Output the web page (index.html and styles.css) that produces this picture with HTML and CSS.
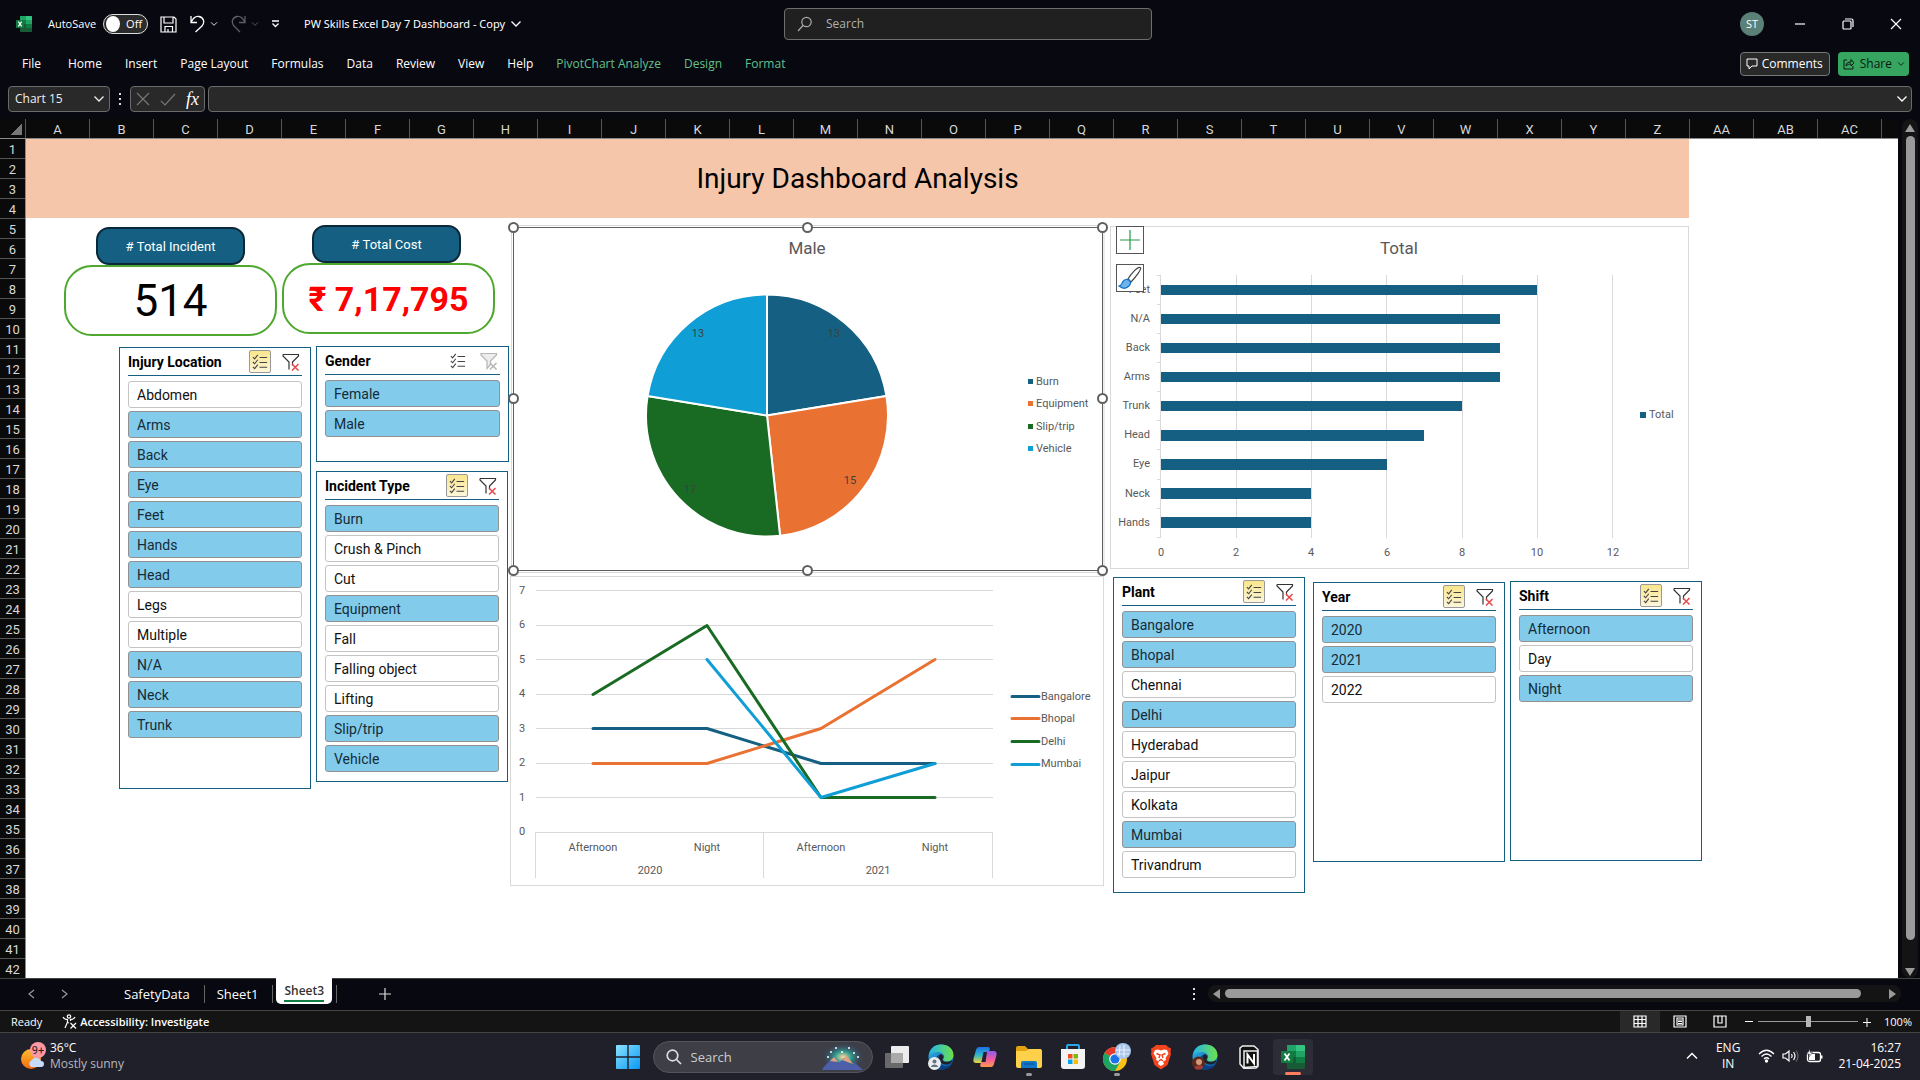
FILE: index.html
```html
<!DOCTYPE html>
<html lang="en">
<head>
<meta charset="utf-8">
<title>PW Skills Excel Day 7 Dashboard - Copy</title>
<link rel="stylesheet" href="styles.css">
</head>
<body>
<svg class="defs" aria-hidden="true">
  <defs>
    <symbol id="chev" viewBox="0 0 12 8"><path d="M1.500 1.500 6 6 10.500 1.500" fill="none" stroke="currentColor" stroke-width="1.300"/></symbol>
    <symbol id="multi" viewBox="0 0 18 18"><path d="M1 3.500 3 5.500 6.500 1M1 9 3 11 6.500 6.500M1 14.500 3 16.500 6.500 12M8.500 4H17M8.500 9.500H17M8.500 15H17" fill="none" stroke="#444" stroke-width="1.200"/></symbol>
    <symbol id="clear" viewBox="0 0 18 18"><path d="M1 1.500H16.500V3L10.500 9V12.500M1 1.500V3L7 9V16.500" fill="none" stroke="#333" stroke-width="1.200"/><path d="M10 11 16.500 17.500M16.500 11 10 17.500" stroke="#e8484a" stroke-width="1.500"/></symbol>
    <symbol id="clear-off" viewBox="0 0 18 18"><path d="M1 1.500H16.500V3L10.500 9V12.500L7 16.500V9L1 3Z" fill="#ededed" stroke="#b5b5b5" stroke-width="1.200"/><path d="M10 11 16.500 17.500M16.500 11 10 17.500" stroke="#b5b5b5" stroke-width="1.500"/></symbol>
    <symbol id="excel" viewBox="0 0 24 24"><path d="M7 0H23a1 1 0 0 1 1 1V23a1 1 0 0 1-1 1H7a1 1 0 0 1-1-1V1a1 1 0 0 1 1-1Z" fill="#185c37"/><path d="M6 0H15V6H6Z" fill="#21a366"/><path d="M15 0H23a1 1 0 0 1 1 1V6H15Z" fill="#33c481"/><path d="M6 6H15V12H6Z" fill="#107c41"/><path d="M15 6H24V12H15Z" fill="#21a366"/><path d="M15 12H24V18H15Z" fill="#107c41"/><rect y="6" width="12" height="12" rx="1" fill="#107c41"/><path d="M3.500 8.500 8.500 15.500M8.500 8.500 3.500 15.500" stroke="#fff" stroke-width="1.800"/></symbol>
    <linearGradient id="edgeBlue" x1="0" y1="0" x2="1" y2="1"><stop offset="0" stop-color="#2fb9ee"/><stop offset="1" stop-color="#0b4fa0"/></linearGradient>
    <linearGradient id="edgeGreen" x1="0" y1="0" x2="1" y2="0"><stop offset="0" stop-color="#22b5ea"/><stop offset="1" stop-color="#6ee04b"/></linearGradient>
    <symbol id="edge" viewBox="0 0 26 26"><circle cx="13" cy="13" r="12.500" fill="url(#edgeBlue)"/><path d="M1 11C2 4 7 .5 13 .5c8 0 12.500 5 12.500 10.500 0 4-3 6.500-6.500 6.500-3 0-4.500-1.300-3.500-2.500 2-3-.5-7-5-7C6 8 2 10 1 11Z" fill="url(#edgeGreen)"/><path d="M11 11c-3 5 1 11 7 11 3 0 5-1 6-2-2 3.500-6 5.500-10 5.500C8 25 6 20 7 16c.6-2.500 2-4 4-5Z" fill="#0a3f86"/><path d="M11 11c1.500-1.500 4.500-.5 4.500 2 0 1-1.500 2-.7 3.500 1.200 2 7.200 1.500 9.700-.5-1 4-4 5-7 4.500-5-.5-8.500-5-6.500-9.500Z" fill="#20202b"/></symbol>
    <linearGradient id="win" x1="0" y1="0" x2="1" y2="1"><stop offset="0" stop-color="#8be3ff"/><stop offset="1" stop-color="#0a98f5"/></linearGradient>
    <linearGradient id="copA" x1="0" y1="0" x2="0" y2="1"><stop offset="0" stop-color="#1f6fe8"/><stop offset=".5" stop-color="#2bb8c9"/><stop offset="1" stop-color="#f4d03a"/></linearGradient>
    <linearGradient id="copB" x1="0" y1="0" x2="0" y2="1"><stop offset="0" stop-color="#8a5cf0"/><stop offset=".5" stop-color="#ee5aa0"/><stop offset="1" stop-color="#ff9a4d"/></linearGradient>
    <linearGradient id="sun" x1="0" y1="0" x2="0" y2="1"><stop offset="0" stop-color="#fbc02d"/><stop offset="1" stop-color="#f56a12"/></linearGradient>
    <radialGradient id="glow"><stop offset="0" stop-color="#ffd9a0"/><stop offset=".4" stop-color="#2f9a8e"/><stop offset="1" stop-color="#39406a" stop-opacity="0"/></radialGradient>
  </defs>
</svg>

<header class="titlebar">
  <div class="title-left">
    <svg class="i16"><use href="#excel"/></svg>
    <label class="autosave" for="autosave">AutoSave</label>
    <span class="toggle"><input type="checkbox" id="autosave"><span class="toggle-text">Off</span></span>
    <button class="tool save" aria-label="Save"><svg width="17" height="17" viewBox="0 0 17 17" fill="none" stroke="#fff" stroke-width="1.200"><path d="M1 1H14L16 3V16H1ZM4 1V7H13V1M5 16V10.500H12.500V16M8 16V13"/></svg></button>
    <button class="tool undo" aria-label="Undo"><svg width="17" height="18" viewBox="0 0 17 18" fill="none" stroke="#fff" stroke-width="1.300"><path d="M2 1V7.500H8M2 7.500C4 3 7 1 10 1.500c5 1 6 6 3 9.500L6.500 17"/></svg><svg class="ch"><use href="#chev"/></svg></button>
    <button class="tool redo" aria-label="Redo" disabled><svg width="17" height="18" viewBox="0 0 17 18" fill="none" stroke="#5d5d64" stroke-width="1.300"><path d="M15 1V7.500H9M15 7.500C13 3 10 1 7 1.500c-5 1-6 6-3 9.500L10 17"/></svg><svg class="ch"><use href="#chev"/></svg></button>
    <button class="tool" aria-label="Customize Quick Access Toolbar"><svg width="9" height="8" viewBox="0 0 9 8" fill="none" stroke="#fff" stroke-width="1.300"><path d="M1 1H8M1.500 3.500 4.500 6.500 7.500 3.500"/></svg></button>
    <button class="doc">PW Skills Excel Day 7 Dashboard - Copy <svg class="ch12"><use href="#chev"/></svg></button>
  </div>
  <label class="search"><svg width="16" height="16" viewBox="0 0 16 16" fill="none" stroke="#aaa" stroke-width="1.200"><circle cx="9.500" cy="6" r="4.700"/><path d="M6 9.500 1 15"/></svg><input type="search" placeholder="Search" aria-label="Search"></label>
  <div class="title-right">
    <button class="avatar" aria-label="Account">ST</button>
    <button class="win" aria-label="Minimize"><svg width="12" height="12" viewBox="0 0 12 12" stroke="#fff" stroke-width="1.200"><path d="M1 6H11"/></svg></button>
    <button class="win" aria-label="Restore"><svg width="12" height="12" viewBox="0 0 12 12" fill="none" stroke="#fff" stroke-width="1.200"><rect x="1" y="3" width="8" height="8" rx="1"/><path d="M3 1H9.500Q11 1 11 2.500V9"/></svg></button>
    <button class="win" aria-label="Close"><svg width="12" height="12" viewBox="0 0 12 12" stroke="#fff" stroke-width="1.200"><path d="M1 1 11 11M11 1 1 11"/></svg></button>
  </div>
</header>

<nav class="menu">
  <button class="file">File</button><button>Home</button><button>Insert</button><button>Page Layout</button><button>Formulas</button><button>Data</button><button>Review</button><button>View</button><button>Help</button><button class="ctx">PivotChart Analyze</button><button class="ctx">Design</button><button class="ctx">Format</button>
  <span class="spacer"></span>
  <button class="comments"><svg width="12" height="12" viewBox="0 0 12 12" fill="none" stroke="#fff"><path d="M1 1H11V8H6L3 11V8H1Z"/></svg>Comments</button>
  <button class="share"><svg width="12" height="12" viewBox="0 0 12 12" fill="none" stroke="#0b1a10"><path d="M4 2H1V11H10V8M3 8C3 5 5 4 8 4V1.500L11 5 8 8V6C6 6 4.500 6.500 3 8Z"/></svg>Share<svg class="ch"><use href="#chev"/></svg></button>
</nav>

<div class="formula">
  <div class="namebox"><input type="text" value="Chart 15" aria-label="Name Box"><svg class="ch12"><use href="#chev"/></svg></div>
  <svg class="dots" width="4" height="12" viewBox="0 0 4 12" fill="#ddd"><path d="M1 0H3V2H1ZM1 5H3V7H1ZM1 10H3V12H1Z"/></svg>
  <div class="fx">
    <button aria-label="Cancel" disabled><svg width="14" height="14" viewBox="0 0 14 14" stroke="#777" stroke-width="1.200"><path d="M1 1 13 13M13 1 1 13"/></svg></button>
    <button aria-label="Enter" disabled><svg width="16" height="13" viewBox="0 0 16 13" fill="none" stroke="#777" stroke-width="1.200"><path d="M1 8 5 12 15 1"/></svg></button>
    <button class="fn" aria-label="Insert Function">fx</button>
  </div>
  <div class="fbar"><input type="text" aria-label="Formula Bar"><svg class="ch12"><use href="#chev"/></svg></div>
</div>

<main class="workbook">
  <div class="sheet">
    <div class="cols">
      <span class="corner"></span>
      <span>A</span><span>B</span><span>C</span><span>D</span><span>E</span><span>F</span><span>G</span><span>H</span><span>I</span><span>J</span><span>K</span><span>L</span><span>M</span><span>N</span><span>O</span><span>P</span><span>Q</span><span>R</span><span>S</span><span>T</span><span>U</span><span>V</span><span>W</span><span>X</span><span>Y</span><span>Z</span><span>AA</span><span>AB</span><span>AC</span>
    </div>
    <div class="body">
      <div class="rows"><span>1</span><span>2</span><span>3</span><span>4</span><span>5</span><span>6</span><span>7</span><span>8</span><span>9</span><span>10</span><span>11</span><span>12</span><span>13</span><span>14</span><span>15</span><span>16</span><span>17</span><span>18</span><span>19</span><span>20</span><span>21</span><span>22</span><span>23</span><span>24</span><span>25</span><span>26</span><span>27</span><span>28</span><span>29</span><span>30</span><span>31</span><span>32</span><span>33</span><span>34</span><span>35</span><span>36</span><span>37</span><span>38</span><span>39</span><span>40</span><span>41</span><span>42</span></div>
      <div class="canvas">
        <h1 class="banner">Injury Dashboard Analysis</h1>

        <div class="obj pill at-incident">#&nbsp;Total Incident</div>
        <div class="obj kpi at-514">514</div>
        <div class="obj pill at-cost">#&nbsp;Total Cost</div>
        <div class="obj kpi cost at-rupee">₹ 7,17,795</div>

        <section class="obj slicer at-location">
          <header><h2>Injury Location</h2><button class="ms on" aria-label="Multi-Select"><svg><use href="#multi"/></svg></button><button class="cf" aria-label="Clear Filter"><svg><use href="#clear"/></svg></button></header>
          <button class="it">Abdomen</button><button class="it sel">Arms</button><button class="it sel">Back</button><button class="it sel">Eye</button><button class="it sel">Feet</button><button class="it sel">Hands</button><button class="it sel">Head</button><button class="it">Legs</button><button class="it">Multiple</button><button class="it sel">N/A</button><button class="it sel">Neck</button><button class="it sel">Trunk</button>
        </section>

        <section class="obj slicer at-gender">
          <header><h2>Gender</h2><button class="ms" aria-label="Multi-Select"><svg><use href="#multi"/></svg></button><button class="cf" aria-label="Clear Filter" disabled><svg><use href="#clear-off"/></svg></button></header>
          <button class="it sel">Female</button><button class="it sel">Male</button>
        </section>

        <section class="obj slicer at-type">
          <header><h2>Incident Type</h2><button class="ms on" aria-label="Multi-Select"><svg><use href="#multi"/></svg></button><button class="cf" aria-label="Clear Filter"><svg><use href="#clear"/></svg></button></header>
          <button class="it sel">Burn</button><button class="it">Crush &amp; Pinch</button><button class="it">Cut</button><button class="it sel">Equipment</button><button class="it">Fall</button><button class="it">Falling object</button><button class="it">Lifting</button><button class="it sel">Slip/trip</button><button class="it sel">Vehicle</button>
        </section>

        <svg class="obj chart at-bar" width="579" height="343" viewBox="0 0 579 343">
          <rect class="frame" x=".5" y=".5" width="578" height="342"/>
          <text class="ct" x="289" y="28">Total</text>
          <path class="gl" d="M50.500 49V312M126.500 49V312M201.500 49V312M276.500 49V312M352.500 49V312M427.500 49V312M502.500 49V312M47 49.500H50M47 78.500H50M47 107.500H50M47 136.500H50M47 165.500H50M47 194.500H50M47 223.500H50M47 253.500H50M47 282.500H50M47 311.500H50"/>
          <g fill="#156082"><rect x="51" y="59" width="376" height="10"/><rect x="51" y="88" width="339" height="10"/><rect x="51" y="117" width="339" height="10"/><rect x="51" y="146" width="339" height="10"/><rect x="51" y="175" width="301" height="10"/><rect x="51" y="204" width="263" height="11"/><rect x="51" y="233" width="226" height="11"/><rect x="51" y="262" width="150" height="11"/><rect x="51" y="291" width="150" height="11"/><rect x="530" y="186" width="6" height="6"/></g>
          <g class="end"><text x="40" y="67">Feet</text><text x="40" y="96">N/A</text><text x="40" y="125">Back</text><text x="40" y="154">Arms</text><text x="40" y="183">Trunk</text><text x="40" y="212">Head</text><text x="40" y="241">Eye</text><text x="40" y="271">Neck</text><text x="40" y="300">Hands</text></g>
          <g class="mid"><text x="51" y="330">0</text><text x="126" y="330">2</text><text x="201" y="330">4</text><text x="277" y="330">6</text><text x="352" y="330">8</text><text x="427" y="330">10</text><text x="503" y="330">12</text></g>
          <text x="539" y="192">Total</text>
        </svg>

        <svg class="obj chart at-line" width="594" height="310" viewBox="0 0 594 310">
          <rect class="frame" x=".5" y=".5" width="593" height="309"/>
          <path class="gl" d="M26 14.500H483M26 49.500H483M26 83.500H483M26 118.500H483M26 152.500H483M26 187.500H483M26 221.500H483M26 256.500H483M25.500 256V302M253.500 256V302M482.500 256V302"/>
          <g class="mid"><text x="12" y="18">7</text><text x="12" y="52">6</text><text x="12" y="87">5</text><text x="12" y="121">4</text><text x="12" y="156">3</text><text x="12" y="190">2</text><text x="12" y="225">1</text><text x="12" y="259">0</text><text x="83" y="275">Afternoon</text><text x="197" y="275">Night</text><text x="311" y="275">Afternoon</text><text x="425" y="275">Night</text><text x="140" y="298">2020</text><text x="368" y="298">2021</text></g>
          <g class="series"><path stroke="#156082" d="M83 152.500H197L311 187.500H425M502 120.500H529"/><path stroke="#e97132" d="M83 187.500H197L311 152.500 425 83.500M502 142.500H529"/><path stroke="#196b24" d="M83 118.500 197 49.500 311 221.500H425M502 165.500H529"/><path stroke="#0f9ed5" d="M197 83.500 311 221.500 425 187.500M502 188.500H529"/></g>
          <text x="531" y="124">Bangalore</text><text x="531" y="146">Bhopal</text><text x="531" y="169">Delhi</text><text x="531" y="191">Mumbai</text>
        </svg>

        <svg class="obj chart at-pie" width="602" height="356" viewBox="-6 -6 602 356">
          <rect x="0" y="0" width="590" height="344" fill="#fff"/>
          <path d="M-1.500 -1.500H591V345.500H-1.500Z" fill="none" stroke="#d9d9d9"/>
          <rect x=".5" y=".5" width="589" height="343" fill="none" stroke="#5f5f5f"/>
          <text class="ct" x="294" y="27">Male</text>
          <g transform="translate(254 188.500)" stroke="#fff" stroke-width="2" stroke-linejoin="round"><path fill="#156082" d="M0 0V-121A121 121 0 0 1 119.410 -19.580Z"/><path fill="#e97132" d="M0 0 119.410 -19.580A121 121 0 0 1 13.090 120.290Z"/><path fill="#196b24" d="M0 0 13.090 120.290A121 121 0 0 1 -119.410 -19.580Z"/><path fill="#0f9ed5" d="M0 0-119.410 -19.580A121 121 0 0 1 0 -121Z"/></g>
          <g class="mid dk"><text x="321" y="110">13</text><text x="337" y="257">15</text><text x="177" y="266">17</text><text x="185" y="110">13</text></g>
          <rect x="515" y="152" width="5" height="5" fill="#156082"/><rect x="515" y="174" width="5" height="5" fill="#e97132"/><rect x="515" y="197" width="5" height="5" fill="#196b24"/><rect x="515" y="219" width="5" height="5" fill="#0f9ed5"/>
          <text x="523" y="158">Burn</text><text x="523" y="180">Equipment</text><text x="523" y="203">Slip/trip</text><text x="523" y="225">Vehicle</text>
          <g fill="#fff" stroke="#5f5f5f" stroke-width="2"><circle cx=".5" cy=".5" r="4.500"/><circle cx="294.500" cy=".5" r="4.500"/><circle cx="589.500" cy=".5" r="4.500"/><circle cx=".5" cy="171.500" r="4.500"/><circle cx="589.500" cy="171.500" r="4.500"/><circle cx=".5" cy="343.500" r="4.500"/><circle cx="294.500" cy="343.500" r="4.500"/><circle cx="589.500" cy="343.500" r="4.500"/></g>
        </svg>

        <div class="obj tools at-tools">
          <button aria-label="Chart Elements"><svg width="22" height="22" viewBox="0 0 22 22" stroke="#1f9a45" stroke-width="1.200"><path d="M11 1V21M1 11H21"/></svg></button>
          <button aria-label="Chart Styles"><svg width="24" height="24" viewBox="0 0 24 24"><path d="M10 13C13 8 19 1 22 1.500S17 12 13 16Z" fill="#fff" stroke="#444" stroke-width="1.200"/><path d="M1 20C5 20 3 14 8 13.500 12 13 14 17 11 20S4 22.500 1 20Z" fill="#6db3ee" stroke="#1570c4" stroke-width="1.200"/></svg></button>
        </div>

        <section class="obj slicer at-plant">
          <header><h2>Plant</h2><button class="ms on" aria-label="Multi-Select"><svg><use href="#multi"/></svg></button><button class="cf" aria-label="Clear Filter"><svg><use href="#clear"/></svg></button></header>
          <button class="it sel">Bangalore</button><button class="it sel">Bhopal</button><button class="it">Chennai</button><button class="it sel">Delhi</button><button class="it">Hyderabad</button><button class="it">Jaipur</button><button class="it">Kolkata</button><button class="it sel">Mumbai</button><button class="it">Trivandrum</button>
        </section>

        <section class="obj slicer at-year">
          <header><h2>Year</h2><button class="ms on" aria-label="Multi-Select"><svg><use href="#multi"/></svg></button><button class="cf" aria-label="Clear Filter"><svg><use href="#clear"/></svg></button></header>
          <button class="it sel">2020</button><button class="it sel">2021</button><button class="it">2022</button>
        </section>

        <section class="obj slicer at-shift">
          <header><h2>Shift</h2><button class="ms on" aria-label="Multi-Select"><svg><use href="#multi"/></svg></button><button class="cf" aria-label="Clear Filter"><svg><use href="#clear"/></svg></button></header>
          <button class="it sel">Afternoon</button><button class="it">Day</button><button class="it sel">Night</button>
        </section>
      </div>
    </div>
  </div>
  <div class="vscroll">
    <svg width="10" height="8" viewBox="0 0 10 8" fill="#9a9a9a"><path d="M5 0 10 8H0Z"/></svg>
    <div class="vthumb"></div>
    <svg width="10" height="8" viewBox="0 0 10 8" fill="#9a9a9a"><path d="M0 0H10L5 8Z"/></svg>
  </div>
</main>

<div class="tabs">
  <button class="nav" aria-label="Previous sheet"><svg width="7" height="10" viewBox="0 0 7 10" fill="none" stroke="#999" stroke-width="1.200"><path d="M6 1 1 5 6 9"/></svg></button>
  <button class="nav" aria-label="Next sheet"><svg width="7" height="10" viewBox="0 0 7 10" fill="none" stroke="#999" stroke-width="1.200"><path d="M1 1 6 5 1 9"/></svg></button>
  <button class="tab first">SafetyData</button>
  <button class="tab">Sheet1</button>
  <button class="tab active"><span>Sheet3</span></button>
  <button class="add" aria-label="New sheet"><svg width="12" height="12" viewBox="0 0 12 12" stroke="#ddd" stroke-width="1.200"><path d="M6 0V12M0 6H12"/></svg></button>
  <span class="spacer"></span>
  <svg class="dots" width="4" height="12" viewBox="0 0 4 12" fill="#ddd"><path d="M1 0H3V2H1ZM1 5H3V7H1ZM1 10H3V12H1Z"/></svg>
  <div class="hscroll">
    <svg width="7" height="10" viewBox="0 0 7 10" fill="#9a9a9a"><path d="M7 0V10L0 5Z"/></svg>
    <div class="hthumb"></div>
    <svg width="7" height="10" viewBox="0 0 7 10" fill="#9a9a9a"><path d="M0 0V10L7 5Z"/></svg>
  </div>
</div>

<div class="status">
  <span class="ready">Ready</span>
  <button class="acc"><svg width="15" height="15" viewBox="0 0 15 15" fill="none" stroke="#fff" stroke-width="1.200"><circle cx="7" cy="2.500" r="1.700"/><path d="M1 3C2 5 5 5.500 5.500 5.500V8L3 14M13 3C12 5 9 5.500 8.500 5.500V7M5.500 8.500 7 9M8.500 9 14 14.500M14 9 8.500 14.500"/></svg>Accessibility: Investigate</button>
  <span class="spacer"></span>
  <button class="view on" aria-label="Normal"><svg width="14" height="13" viewBox="0 0 14 13" fill="none" stroke="#fff" stroke-width="1.200"><path d="M1 1H13V12H1ZM5 1V12M9 1V12M1 4.500H13M1 8.500H13"/></svg></button>
  <button class="view" aria-label="Page Layout"><svg width="14" height="13" viewBox="0 0 14 13" fill="none" stroke="#fff" stroke-width="1.200"><path d="M1 1H13V12H1ZM4 3H10V10H4ZM5 5H9M5 6.500H9M5 8.500H9"/></svg></button>
  <button class="view" aria-label="Page Break Preview"><svg width="14" height="13" viewBox="0 0 14 13" fill="none" stroke="#fff" stroke-width="1.200"><path d="M1 1H13V12H1ZM5 1V8H9V1M9 8V1"/></svg></button>
  <button class="zb" aria-label="Zoom out"><svg width="10" height="10" viewBox="0 0 10 10" stroke="#fff"><path d="M1 4.500H9"/></svg></button>
  <input class="zoom" type="range" min="0" max="100" value="50" aria-label="Zoom">
  <button class="zb" aria-label="Zoom in"><svg width="10" height="10" viewBox="0 0 10 10" stroke="#fff"><path d="M1 5.500H9M5 1V10"/></svg></button>
  <span class="pct">100%</span>
</div>

<footer class="taskbar">
  <button class="weather">
    <svg width="28" height="30" viewBox="0 0 28 30"><circle cx="11" cy="18" r="10" fill="url(#sun)"/><path d="M11 26a4 4 0 0 1 1-7 5 5 0 0 1 9 1 3 3 0 0 1 0 6Z" fill="#c7dbfa"/><circle cx="18" cy="9" r="8" fill="#ff98a3"/><text x="18" y="13" text-anchor="middle" class="badge">9+</text></svg>
    <span class="wtext">36°C<br><span class="soft">Mostly sunny</span></span>
  </button>
  <div class="apps">
    <button class="app" aria-label="Start"><svg width="24" height="24" viewBox="0 0 24 24" fill="url(#win)"><path d="M0 1Q0 0 1 0H11.300V11.300H0ZM12.700 0H23Q24 0 24 1V11.300H12.700ZM0 12.700H11.300V24H1Q0 24 0 23ZM12.700 12.700H24V23Q24 24 23 24H12.700Z"/></svg></button>
    <label class="tsearch"><svg width="16" height="16" viewBox="0 0 16 16" fill="none" stroke="#ddd" stroke-width="1.700"><circle cx="6.500" cy="6.500" r="5.300"/><path d="M10.500 10.500 15 15"/></svg><input type="search" placeholder="Search" aria-label="Search taskbar"><svg width="42" height="28" viewBox="0 0 42 28"><rect width="42" height="28" fill="url(#glow)"/><path d="M0 27C3 22 6 19 9 17L12 14 17 20 22 15 29 22 32 19 41 27Z" fill="#4d5fa8"/><path d="M8 18 12 14 16 19ZM20 17 25 13 31 21Z" fill="#e2a184"/><g fill="#fff"><circle cx="9" cy="9" r="1"/><circle cx="14" cy="5" r="1"/><circle cx="20" cy="9" r="1"/><circle cx="27" cy="5" r="1"/><circle cx="32" cy="10" r="1"/><circle cx="36" cy="14" r="1"/><circle cx="6" cy="14" r="1"/></g></svg></label>
    <button class="app" aria-label="Task View"><svg width="24" height="24" viewBox="0 0 24 24"><rect x="6" y="1" width="18" height="17" rx="1" fill="#ececec"/><rect x="0" y="8" width="18" height="15" rx="1" fill="#777" fill-opacity=".85"/><rect x="6" y="8" width="12" height="10" fill="#aaa"/></svg></button>
    <button class="app" aria-label="Edge"><svg width="26" height="26" viewBox="0 0 26 26"><use href="#edge" width="26" height="26"/><circle cx="6.500" cy="19.500" r="6.500" fill="#e9edf0"/><circle cx="6.500" cy="17.500" r="2" fill="#66717a"/><path d="M3 23C3 19.500 10 19.500 10 23Z" fill="#66717a"/></svg></button>
    <button class="app" aria-label="Copilot"><svg width="24" height="22" viewBox="0 0 24 22"><path d="M6 1H15C17 1 17 3 16.500 4L13 15C12 17 11 17 9 17H3C0 17 0 14 1 11L3 4C3.700 2 4.500 1 6 1Z" fill="url(#copA)"/><path d="M18 21H9C7 21 7 19 7.500 18L11 7C12 5 13 5 15 5H21C24 5 24 8 23 11L21 18C20.300 20 19.500 21 18 21Z" fill="url(#copB)"/><path d="M10.500 6H14L12.500 16H8.500Z" fill="#20202b"/></svg></button>
    <button class="app run" aria-label="File Explorer"><svg width="26" height="24" viewBox="0 0 26 24"><path d="M0 3Q0 1 2 1H9L12 4H25V12H0Z" fill="#e2a313"/><path d="M0 6H10L13 4H24Q26 4 26 6V21Q26 23 24 23H2Q0 23 0 21Z" fill="#ffd04a"/><path d="M5 23V18Q5 16 7 16H19Q21 16 21 18V23Z" fill="#1377c9"/><path d="M8 19H18" stroke="#0b5aa0" stroke-width="1.500"/></svg></button>
    <button class="app" aria-label="Microsoft Store"><svg width="24" height="25" viewBox="0 0 24 25"><path d="M6 6V2Q6 1 7 1H17Q18 1 18 2V6" fill="none" stroke="#2aa7ea" stroke-width="2"/><path d="M0 5H24V22Q24 25 21 25H3Q0 25 0 22Z" fill="#f3f3f3"/><path fill="#f25022" d="M7 10H11.500V14.500H7Z"/><path fill="#7fba00" d="M12.500 10H17V14.500H12.500Z"/><path fill="#00a4ef" d="M7 15.500H11.500V20H7Z"/><path fill="#ffb900" d="M12.500 15.500H17V20H12.500Z"/></svg></button>
    <button class="app run" aria-label="Chrome"><svg width="28" height="30" viewBox="0 0 28 30"><circle cx="12" cy="17" r="12" fill="#fbc116"/><path d="M12 17 1.600 11A12 12 0 0 1 22.400 11Z" fill="#e33b2e"/><path d="M1.600 11A12 12 0 0 0 12 29L17 20 12 17Z" fill="#1da462"/><circle cx="12" cy="17" r="5.800" fill="#fff"/><circle cx="12" cy="17" r="4.600" fill="#1a73e8"/><circle cx="20" cy="9" r="8" fill="#a9c6ec"/><path d="M13 8H27M14 12H26M17 4 16 14M21 3V15" stroke="#e8f0fa" stroke-width="1.200"/></svg></button>
    <button class="app" aria-label="Brave"><svg width="22" height="26" viewBox="0 0 22 26"><path d="M6 1H16L18 3 21 4.500 20.500 8 21 10 17.500 21 11 25.500 4.500 21 1 10 1.500 8 1 4.500 4 3Z" fill="#f4441e"/><path d="M5 6 8 5.500 11 6.500 14 5.500 17 6 18.500 9.500 15.500 14 16 16 13 17.500 14 20 11 22 8 20 9 17.500 6 16 6.500 14 3.500 9.500Z" fill="#fff"/><path d="M6.500 9.500 10 11 9 14M15.500 9.500 12 11 13 14M9 17 11 15.500 13 17" fill="none" stroke="#f4441e" stroke-width="1.500"/></svg></button>
    <button class="app" aria-label="Edge profile"><svg width="26" height="26" viewBox="0 0 26 26"><use href="#edge" width="26" height="26"/><circle cx="6.500" cy="19" r="6.500" fill="#5a2a1c"/><circle cx="7" cy="18" r="3" fill="#d39b7a"/><path d="M2.500 24C3 20.500 11 20.500 11 23L9 25.500H4Z" fill="#a33e36"/></svg></button>
    <button class="app" aria-label="Notion"><svg width="20" height="24" viewBox="0 0 20 24" fill="none"><path d="M1 3 3.500 1 15 1 19 4.500V21L17 23 5 23.500 1 19Z" fill="#111" stroke="#eee" stroke-width="1.500"/><path d="M5 6H18.500V21.500L5 22.500Z" fill="#111" stroke="#eee" stroke-width="1.500"/><path d="M8.500 18.500V9.500L15 18.500V9" stroke="#fff" stroke-width="2"/></svg></button>
    <button class="app current" aria-label="Excel"><svg width="24" height="24"><use href="#excel"/></svg></button>
  </div>
  <div class="tray">
    <button aria-label="Show hidden icons"><svg width="12" height="8" viewBox="0 0 12 8" fill="none" stroke="#fff" stroke-width="1.500"><path d="M1 6.500 6 1.500 11 6.500"/></svg></button>
    <button class="lang">ENG<br>IN</button>
    <button class="sys" aria-label="Network, volume, battery">
      <svg width="17" height="14" viewBox="0 0 17 14" fill="none" stroke="#fff" stroke-width="1.300"><path d="M1 5Q8.500-2.500 16 5M3.500 7.500Q8.500 2.500 13.500 7.500M6 10Q8.500 7.500 11 10"/><circle cx="8.500" cy="12" r="1" fill="#fff"/></svg>
      <svg width="17" height="14" viewBox="0 0 17 14" fill="none" stroke="#fff" stroke-width="1.200"><path d="M1 5H3.500L7 2V12L3.500 9H1ZM9.500 5Q11 7 9.500 9M11.500 3Q14.500 7 11.500 11"/><path d="M14 1.500Q18 7 14 12.500" stroke="#666"/></svg>
      <svg width="17" height="14" viewBox="0 0 17 14"><rect x="1.500" y="3.500" width="13" height="9" rx="2" fill="none" stroke="#fff" stroke-width="1.300"/><path d="M15 6.500H16.500V9.500H15ZM3 5H9V11H3Z" fill="#fff"/><path d="M4 0 1 5H3.500L2.500 8.500 6.500 3.500H4Z" fill="#fff" stroke="#20202b" stroke-width=".5"/></svg>
    </button>
    <button class="clock">16:27<br>21-04-2025</button>
  </div>
</footer>
</body>
</html>
```
FILE: styles.css
```css
* { box-sizing: border-box; }
body {
  margin: 0;
  min-height: 100vh;
  display: flex;
  flex-direction: column;
  background: #080810;
  color: #fff;
  font: 12px/16px "Open Sans", "Noto Sans", sans-serif;
  overflow-x: hidden;
}
button, input { font: inherit; color: inherit; }
button { border: 0; background: none; padding: 0; text-align: center; display: flex; align-items: center; }
input[type="text"], input[type="search"] { border: 0; background: none; padding: 0; outline: 0; flex: 1; min-width: 0; appearance: none; }
svg { display: block; flex: none; }
.defs { position: absolute; width: 0; height: 0; }
.spacer { flex: 1; }
.ch { width: 8px; height: 6px; }
.ch12 { width: 12px; height: 8px; }
.i16 { width: 16px; height: 16px; }

/* Title bar */
.titlebar { display: grid; grid-template-columns: 1fr 368px 1fr; height: 48px; align-items: center; padding-left: 16px; }
.title-left { display: flex; align-items: center; margin-right: 16px; }
.autosave { margin: 0 7px 0 16px; font-size: 11px; }
.toggle { width: 45px; height: 20px; border: 1px solid #ddd; border-radius: 10px; background: #2b2b2b; display: flex; align-items: center; padding: 0 5px 0 2px; justify-content: space-between; font-size: 11px; }
.toggle input { appearance: none; width: 14px; height: 16px; margin: 0; border-radius: 50%; background: #fff; }
.tool { margin-left: 12px; gap: 5px; }
.undo, .redo { gap: 4px; }
.redo { color: #5d5d64; }
.doc { margin-left: 24px; gap: 5px; font: 11px/16px "Noto Sans", sans-serif; white-space: nowrap; }
.search { display: flex; align-items: center; height: 32px; padding: 0 12px; gap: 13px; background: #202020; border: 1px solid #6e6e6e; border-radius: 4px; font-size: 12px; }
::placeholder { color: #b0b0b0; opacity: 1; }
.title-right { display: flex; justify-content: flex-end; align-items: center; }
.avatar { width: 24px; height: 24px; border-radius: 50%; background: #5a8078; justify-content: center; font-size: 11px; margin-right: 12px; }
.win { width: 48px; height: 32px; justify-content: center; }

/* Ribbon tabs */
.menu { display: flex; align-items: center; gap: 23px; height: 31px; padding: 0 11px 0 22px; font-size: 12px; }
.menu button { white-space: nowrap; }
.menu .file { margin-right: 4px; }
.ctx { color: #65c08c; }
.menu .comments { height: 24px; padding: 0 6px 0 5px; gap: 4px; border: 1px solid #777; border-radius: 4px; background: #292929; margin-right: -15px; }
.menu .share { height: 24px; padding: 0 4px 0 5px; gap: 5px; border-radius: 4px; background: #36a55f; color: #0b1a10; }

/* Formula bar */
.formula { display: flex; align-items: center; height: 40px; padding: 0 8px; }
.namebox, .fx, .fbar { height: 26px; display: flex; align-items: center; border: 1px solid #6a6a6a; border-radius: 4px; background: #292929; }
.namebox { width: 102px; padding: 0 4px 0 6px; color: #eee; }
.formula .dots { margin: 0 8px; }
.fx { width: 75px; padding: 0 5px; justify-content: space-between; }
.fn { font: italic 18px/20px "Liberation Serif", serif; }
.fbar { flex: 1; margin-left: 3px; padding: 0 3px; }

/* Worksheet */
.workbook { display: flex; flex: 1 0 auto; font-family: Roboto, sans-serif; }
.sheet { flex: 1; min-width: 0; overflow: hidden; display: flex; flex-direction: column; }
.cols { display: flex; height: 20px; background: #0a0a0a; border-bottom: 1px solid #8a8a8a; color: #d8d8d8; font-size: 13px; line-height: 21px; text-align: center; }
.cols span { flex: none; width: 64px; border-right: 1px solid #555; }
.cols .corner { width: 26px; background: linear-gradient(135deg, #0a0a0a 50%, #777 50%) 10px 4px / 12px 12px no-repeat; }
.body { display: flex; flex: 1; }
.rows { width: 26px; flex: none; background: #0a0a0a; border-right: 1px solid #8a8a8a; color: #d8d8d8; font-size: 13px; line-height: 21px; text-align: center; }
.rows span { display: block; height: 20px; border-bottom: 1px solid #555; }
.rows span:last-child { height: 19px; border: 0; }
.canvas { flex: 1; position: relative; background: #fff; color: #000; }
.banner { width: 1663px; height: 79px; margin: 0; background: #f6c6ab; font-size: 28px; line-height: 80px; font-weight: 400; text-align: center; }
.obj { position: absolute; }

.pill { width: 149px; height: 38px; border: 2px solid #0a2838; border-radius: 13px; background: #156082; color: #fff; font-size: 13px; line-height: 35px; text-align: center; }
.kpi { width: 213px; height: 71px; border: 2px solid #4ea72e; border-radius: 28px; font-size: 44px; line-height: 68px; text-align: center; background: #fff; }
.cost { font-size: 34px; font-weight: 700; color: #f00; }

/* Slicers */
.slicer { width: 192px; border: 1px solid #156082; background: #fff; padding: 0 8px; display: flex; flex-direction: column; gap: 3px; }
.slicer header { display: flex; align-items: center; height: 28px; border-bottom: 1px solid #156082; margin-bottom: 2px; }
.slicer h2 { flex: 1; margin: 0; font-size: 14px; line-height: 20px; font-weight: 700; }
.ms { width: 22px; height: 23px; justify-content: center; border: 1px solid transparent; border-radius: 2px; margin-right: 11px; }
.ms.on { background: linear-gradient(#f9e58a, #fdf6dc); border-color: #999; }
.ms svg { width: 16px; height: 16px; }
.cf { margin-right: 2px; }
.cf svg { width: 18px; height: 18px; }
.it { height: 27px; border: 1px solid #c4c4c4; border-radius: 3px; padding: 0 8px; font-size: 14px; color: #111; flex: none; }
.it.sel { background: #83cbeb; border-color: #929292; color: #142c38; }

/* Charts */
.chart text { font-size: 11px; fill: #595959; }
.chart .ct { font-size: 17px; text-anchor: middle; }
.frame { fill: #fff; stroke: #d9d9d9; }
.gl { stroke: #d9d9d9; fill: none; }
.mid text { text-anchor: middle; }
.end text { text-anchor: end; }
.chart .dk text { fill: #404040; }
.series { fill: none; stroke-width: 3; stroke-linecap: round; stroke-linejoin: round; }
.tools { display: grid; gap: 10px; }
.tools button { width: 28px; height: 28px; border: 1px solid #555; background: #fff; justify-content: center; }

/* Where each object is anchored on the sheet */
.at-incident { left: 70px; top: 88px; }
.at-514 { left: 38px; top: 126px; }
.at-cost { left: 286px; top: 86px; }
.at-rupee { left: 256px; top: 124px; }
.at-location { left: 93px; top: 208px; height: 442px; }
.at-gender { left: 290px; top: 207px; width: 193px; height: 116px; }
.at-type { left: 290px; top: 332px; height: 311px; }
.at-pie { left: 481px; top: 82px; }
.at-bar { left: 1084px; top: 87px; }
.at-line { left: 484px; top: 437px; }
.at-tools { left: 1090px; top: 87px; }
.at-plant { left: 1087px; top: 438px; height: 316px; }
.at-year { left: 1287px; top: 443px; height: 280px; }
.at-shift { left: 1484px; top: 442px; height: 280px; }

.vscroll { width: 16px; margin: 0 2px 0 4px; padding: 5px 0 2px; border-radius: 8px; background: #141414; display: flex; flex-direction: column; align-items: center; gap: 4px; }
.vthumb { width: 9px; flex: 1; margin-bottom: 24px; border-radius: 5px; background: #9a9a9a; }

/* Sheet tabs */
.tabs { display: flex; align-items: center; height: 32px; border-top: 1px solid #444; padding: 0 19px 2px 28px; font-size: 13px; }
.nav { margin-right: 26px; }
.tab { height: 18px; padding: 0 14px 0 12px; border-right: 1px solid #666; }
.tab.first { margin-left: 18px; }
.tab.active { height: 28px; margin: -3px 0 0 3px; padding: 0 8px; align-self: flex-start; align-items: flex-start; background: #fff; color: #333; border: 0; border-radius: 0 0 5px 5px; font-weight: 600; font-size: 12px; }
.tab.active span { margin-top: 6px; border-bottom: 2px solid #107c41; line-height: 18px; }
.add { margin-left: 4px; padding-left: 43px; background: linear-gradient(#666, #666) 0 50% / 1px 18px no-repeat; height: 18px; }
.tabs .dots { margin-right: 12px; }
.hscroll { width: 37%; height: 17px; border-radius: 8px; background: #141414; padding: 0 5px; display: flex; align-items: center; gap: 5px; }
.hthumb { height: 9px; flex: 1; margin-right: 23px; border-radius: 5px; background: #9a9a9a; }

/* Status bar */
.status { display: flex; align-items: center; height: 22px; background: #141414; border-top: 1px solid #444; padding-right: 8px; font-size: 11px; }
.ready { margin: 0 20px 0 11px; }
.acc { font-weight: 600; gap: 3px; }
.view { width: 40px; height: 21px; justify-content: center; }
.view.on { background: #292929; }
.zb { margin-left: 4px; }
.zoom { appearance: none; width: 100px; margin: 0 0 0 4px; height: 12px; background: linear-gradient(#999, #999) 0 50% / 100% 1px no-repeat; }
.zoom::-webkit-slider-thumb { appearance: none; width: 5px; height: 11px; background: #b5b5b5; }
.pct { margin-left: 12px; }

/* Taskbar */
.taskbar { display: grid; grid-template-columns: 1fr auto 1fr; height: 48px; background: #20202b; border-top: 1px solid #444; }
.weather { padding-left: 20px; gap: 2px; text-align: left; font-size: 12px; padding-bottom: 2px; }
.badge { font: 11px Roboto, sans-serif; fill: #222; }
.soft { color: #b8b8bd; }
.apps { display: flex; align-items: center; }
.app { position: relative; width: 44px; height: 40px; justify-content: center; }
.app.current { border: 2px solid transparent; background: #2d2d38; background-clip: padding-box; border-radius: 6px; }
.app.run::after, .app.current::after { content: ""; position: absolute; bottom: 1px; left: 50%; width: 6px; height: 3px; margin-left: -3px; border-radius: 2px; background: #999; }
.app.current::after { width: 16px; margin-left: -8px; bottom: 0; background: #ff7f5e; }
.tsearch { display: flex; align-items: center; gap: 9px; width: 220px; height: 32px; margin: 0 2px 0 3px; padding: 0 8px 0 12px; border-radius: 16px; background: #3e3e47; border: 1px solid #54545c; font-size: 13px; }
.tsearch ::placeholder { color: #ccc; }
.tray { display: flex; align-items: center; justify-content: flex-end; padding-right: 19px; padding-bottom: 1px; font-size: 12px; }
.lang { margin: 0 18px; line-height: 16px; }
.sys { gap: 7px; margin-right: 15px; }
.clock { text-align: right; }
```
